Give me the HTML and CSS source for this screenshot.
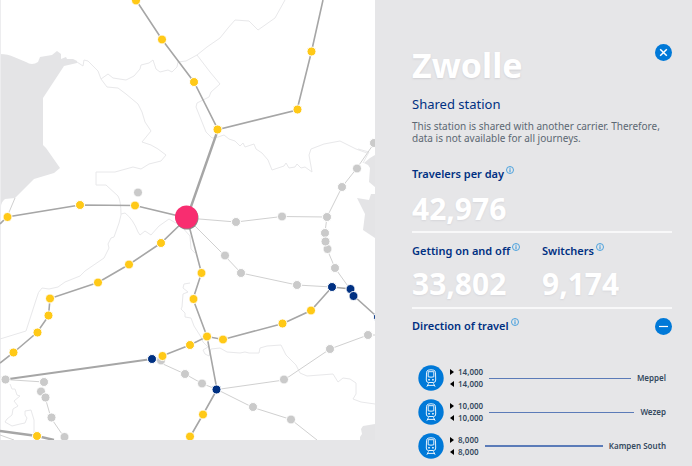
FILE: index.html
```html
<!DOCTYPE html>
<html lang="en">
<head>
<meta charset="utf-8">
<meta name="viewport" content="width=device-width, initial-scale=1">
<title>Zwolle</title>
<link rel="stylesheet" href="styles.css">
</head>
<body>
<svg class="symbols" aria-hidden="true">
  <symbol id="info" viewBox="0 0 8 8"><circle cx="4" cy="4" r="3.5" fill="none" stroke="currentColor" stroke-width=".9"/><path d="M4 1.800v.9M4 3.300v2.900" stroke="currentColor" stroke-width="1.100"/></symbol>
  <symbol id="train" viewBox="0 0 26 26">
    <circle cx="13" cy="13" r="12.700" fill="#0079d8"/>
    <g fill="none" stroke="#fff" stroke-width=".9" stroke-linejoin="round">
      <path d="M10.200 5.200q2.800-.9 5.600 0 1.600.5 1.700 2.500l.2 7.300q0 2.500-2.100 2.500h-5.200q-2.100 0-2.100-2.500l.2-7.300q.1-2 1.700-2.500z"/>
      <path d="M10.200 6.700h5.600v5.100q-2.800.8-5.600 0zM10.600 18.300l-1.700 3.400M15.400 18.300l1.700 3.400M9.400 20.400h7.200"/>
    </g>
    <path d="M10.300 14h1.500v1.400h-1.500zM14.200 14h1.500v1.400h-1.500z" fill="#fff"/>
  </symbol>
</svg>
<main class="layout">
  <section class="map-area" aria-label="Railway map">
    <svg class="map" viewBox="0 0 375 440">
      <path fill="#fff" d="M0 0H375V440H0z"/>
      <g class="water">
        <path d="M0 54Q8 54 14 57L26 62Q32 66 38 62L40 57 52 55 57 51 61 54V59L66 57 67 59 73 59 77 61 77 63 64 66 43 98V145L46 148 53 158 60 168 54 173 34 179 15 198 5 199Q1 202 1 207H0z"/>
        <path d="M375 155L370 158 364 163 368 165 370 168 369 182 375 187V194L371 194 369 200 357 198 365 214 363 230 375 238zM375 424L363 426 361 429 362 434 360 437V440H375z"/>
      </g>
      <path d="M.5 0V440" stroke="#ededef"/>
      <g class="borders">
        <path d="M77 62L83 66 84 60 88 61 98 71 101 79 108 74 113 78 126 80 134 76 140 69 141 65 149 63 153 60 156 69 160 72 168 70 172 72 177 67 178 62 186 61 197 55 207 47 220 38 228 28 235 20 249 21 258 30 275 18 285 0"/>
        <path d="M101 79L107 87 118 88 126 94 138 104 142 112 145 122 151 131 142 142 151 145 158 149 166 155 161 161 149 164 141 169 133 167 115 172H96V185H106L118 196Q121 201 121 215L119 223 114 237 111 238 108 244 109 248 104 258 85 271 80 276 65 282 58 287 49 289 42 288Q38 291 36 300L26 331 0 339"/>
        <path d="M121 214L125 213Q133 219 138 232L140 235 145 231 151 235 159 226 169 219 181 226 190 236 191 249 195 253M197 55L210 72 220 84 211 92 209 97 197 103 196 107 206 132 212 138 218 137 224 135 229 139 235 141 240 146 243 143 245 147 254 144 256 149 262 153 268 160 272 170 281 167 284 166 286 163 289 168 295 167 297 164 301 168 305 167 312 172 309 155 311 149 324 144 340 141 356 149 367 153M190 283L184 284 183 288 188 292 183 294 182 307 181 309 185 313 185 317 191 318 194 326 201 337 203 342 208 347 203 350 205 354 209 356 211 349 220 348 227 352 240 353 245 352 249 353 259 353 260 348 267 346 281 345 286 355 296 365 300 373 307 376 333 374 338 382 343 378 350 379 356 383 356 394 353 399 361 402 375 404"/>
        <path d="M10 384L12 389 15 389 17 395 20 396 14 401 18 406 13 409 12 415 7 419 5 422 12 426 20 424 25 423 27 418 25 415 25 411 31 410 34 420V435M358 149L369 152 363 163"/>
      </g>
      <g class="quiet routes">
        <path d="M15 198L7 217M187 218L236 222 282 216.500 327 217 325 232 326 241 327 249 335 268 350 289M327 217L342 187 357 168 375 142M187 218L225 256 241 273 297 285 332 287M5 379.500L44 382M45 397L51 418 64 437M152 359L185 374 202 383.500 217 389.500 253 407.500 291 419.500 317 440M217 389.500L284 380 330 349 368 335H375M0 435L14 440"/>
      </g>
      <g class="routes">
        <path d="M136 0L162 39.500 194 82 218 129.500 297 110 311.500 51.500 323 0M0 224L7 217 80 205 135 205.500 187 218 161 243 129 264.500 98 282.500 50 298.500 48.500 316 37 332.500 13 353 0 363"/>
        <path d="M187 218L201.500 273 193 299 207 336.500 217 389.500 203 414.500 190 437M162 356L190 345 207 336.500 223 339.500 283 323.500 311 310.500 332 287 351 289 354 296 375 315"/>
        <path class="medium" d="M5 379.500L152 359"/>
        <path class="thick" d="M218 129.500L187 218M0 431L37 436 54 440"/>
      </g>
      <g class="stations quiet-stops"><circle cx="138" cy="192.500" r="4.500"/><circle cx="236" cy="222" r="4.500"/><circle cx="282" cy="216.500" r="4.500"/><circle cx="327" cy="217" r="4.500"/><circle cx="342" cy="187" r="4.500"/><circle cx="357" cy="168.500" r="4.500"/><circle cx="374" cy="143" r="4.500"/><circle cx="325" cy="233" r="4.500"/><circle cx="327.500" cy="249" r="4.500"/><circle cx="325.500" cy="241.500" r="4.500"/><circle cx="335" cy="268" r="4.500"/><circle cx="225" cy="255.500" r="4.500"/><circle cx="241" cy="273" r="4.500"/><circle cx="297" cy="285" r="4.500"/><circle cx="5.500" cy="379.500" r="4.500"/><circle cx="44" cy="382" r="4.500"/><circle cx="41" cy="391.500" r="4.500"/><circle cx="45.500" cy="397.500" r="4.500"/><circle cx="51.500" cy="417.500" r="4.500"/><circle cx="64.500" cy="437" r="4.500"/><circle cx="161" cy="360.500" r="4.500"/><circle cx="185" cy="374" r="4.500"/><circle cx="202" cy="383.500" r="4.500"/><circle cx="253" cy="407" r="4.500"/><circle cx="291" cy="419.500" r="4.500"/><circle cx="284" cy="379.500" r="4.500"/><circle cx="330" cy="349" r="4.500"/><circle cx="368" cy="335" r="4.500"/></g>
      <g class="stations busy-stops"><circle cx="136" cy="0.500" r="4.500"/><circle cx="162" cy="39.500" r="4.500"/><circle cx="194" cy="82" r="4.500"/><circle cx="217.500" cy="129.500" r="4.500"/><circle cx="297.500" cy="109.500" r="4.500"/><circle cx="311.500" cy="51.500" r="4.500"/><circle cx="7.500" cy="217" r="4.500"/><circle cx="80" cy="205" r="4.500"/><circle cx="135" cy="205.500" r="4.500"/><circle cx="161" cy="243" r="4.500"/><circle cx="129" cy="264.500" r="4.500"/><circle cx="98" cy="282.500" r="4.500"/><circle cx="50" cy="298.500" r="4.500"/><circle cx="48.500" cy="315.500" r="4.500"/><circle cx="37.500" cy="332.500" r="4.500"/><circle cx="13.500" cy="352.500" r="4.500"/><circle cx="201.500" cy="273" r="4.500"/><circle cx="193.500" cy="299" r="4.500"/><circle cx="207" cy="336.500" r="4.500"/><circle cx="190" cy="345" r="4.500"/><circle cx="162.500" cy="356" r="4.500"/><circle cx="223" cy="339.500" r="4.500"/><circle cx="282.500" cy="323.500" r="4.500"/><circle cx="311" cy="310.500" r="4.500"/><circle cx="203" cy="414.500" r="4.500"/><circle cx="190" cy="436.500" r="4.500"/><circle cx="37" cy="436" r="4.500"/></g>
      <g class="stations hub-stops"><circle cx="152" cy="359" r="4.500"/><circle cx="332" cy="287" r="4.500"/><circle cx="350.500" cy="289" r="4.500"/><circle cx="353.500" cy="296" r="4.500"/><circle cx="216.500" cy="389.500" r="4.500"/><circle cx="378" cy="317" r="4.500"/></g>
      <circle cx="187" cy="218" r="11.500" fill="#888"/>
      <circle cx="186.500" cy="217" r="11.500" fill="#f82d70"/>
    </svg>
  </section>
  <aside class="panel">
    <header class="top">
      <h1>Zwolle</h1>
      <button class="round" aria-label="Close"><svg viewBox="0 0 17 17"><path d="M5.200 5.200l6.600 6.600M11.800 5.200l-6.600 6.600" stroke="#fff" stroke-width="1.500"/></svg></button>
    </header>
    <h2 class="status">Shared station</h2>
    <p class="note">This station is shared with another carrier. Therefore, data is not available for all journeys.</p>
    <section class="stats">
      <div class="stat"><h3>Travelers per day<svg class="info"><use href="#info"/></svg></h3><p class="number">42,976</p></div>
    </section>
    <section class="stats split">
      <div class="stat"><h3>Getting on and off<svg class="info"><use href="#info"/></svg></h3><p class="number">33,802</p></div>
      <div class="stat"><h3>Switchers<svg class="info"><use href="#info"/></svg></h3><p class="number">9,174</p></div>
    </section>
    <section>
      <div class="direction-head">
        <h3>Direction of travel<svg class="info"><use href="#info"/></svg></h3>
        <button class="round" aria-label="Collapse"><svg viewBox="0 0 17 17"><path d="M4 8.500h9" stroke="#fff" stroke-width="1.200"/></svg></button>
      </div>
      <ul class="directions">
        <li><svg class="train"><use href="#train"/></svg><div class="flows"><span class="out">14,000</span><span class="in">14,000</span></div><span class="rule"></span><span>Meppel</span></li>
        <li><svg class="train"><use href="#train"/></svg><div class="flows"><span class="out">10,000</span><span class="in">10,000</span></div><span class="rule"></span><span>Wezep</span></li>
        <li><svg class="train"><use href="#train"/></svg><div class="flows"><span class="out">8,000</span><span class="in">8,000</span></div><span class="rule strong"></span><span>Kampen South</span></li>
      </ul>
    </section>
  </aside>
</main>
</body>
</html>
```

FILE: styles.css
```css
* { box-sizing: border-box; }
body { margin: 0; background: #e6e6e8; color: #003082; font-family: "Noto Sans", sans-serif; }
h1, h2, h3, p, ul { margin: 0; padding: 0; }
.symbols { display: none; }
.layout { display: grid; grid-template-columns: 375fr 317fr; align-items: start; }
.map { display: block; width: 100%; }
.water { fill: #e4e4e6; }
.borders { fill: none; stroke: #e8e8ea; stroke-width: 1; stroke-linejoin: round; }
.routes { fill: none; stroke: #a6a6a6; stroke-width: 1.6; }
.routes .medium { stroke-width: 1.8; }
.routes .thick { stroke-width: 2.4; }
.quiet { stroke: #d0d0d0; stroke-width: 1; }
.stations { stroke: #fff; stroke-width: 1; }
.quiet-stops { fill: #cacaca; }
.busy-stops { fill: #ffc917; }
.hub-stops { fill: #003082; }
.panel { padding: 40px 20px 0 37px; }
.top { display: flex; justify-content: space-between; align-items: flex-start; }
h1 { color: #fff; font-size: 34px; line-height: 50px; text-shadow: 0 1px 2px #d0d0d4; }
.round { width: 17px; height: 17px; margin-top: 4px; padding: 0; border: 0; border-radius: 50%; background: #0079d8; }
.round svg { display: block; width: 17px; height: 17px; }
.status { margin-top: 4px; font-size: 13px; line-height: 20px; font-weight: 400; }
.note { margin-top: 6px; color: #5c6873; font-size: 10px; line-height: 12px; }
.stats { border-bottom: 2px solid #f8f8f9; }
.note + .stats { margin-top: 22px; }
.split { display: grid; grid-template-columns: 1fr 1fr; padding-top: 10px; }
h3 { font-size: 11px; line-height: 16px; font-weight: 600; }
.info { width: 8px; height: 8px; margin-left: 2px; vertical-align: 4px; color: #3d9bdc; }
.number { margin-top: 7px; padding-bottom: 3px; color: #fff; font-size: 30px; line-height: 39px; font-weight: 700; text-shadow: 0 1px 2px #d6d6da; }
.split .number { margin-top: 5px; padding-bottom: 4px; }
.direction-head { display: flex; justify-content: space-between; padding-top: 9px; }
.direction-head .round { margin-top: 0; }
.directions { margin-top: 30px; padding: 0 6px; list-style: none; display: grid; gap: 8px; color: #34495e; font-size: 8px; line-height: 12px; font-weight: 600; }
.directions li { display: flex; align-items: center; gap: 6px; }
.train { width: 26px; height: 26px; }
.flows { display: grid; }
.flows span { display: flex; align-items: center; gap: 4px; }
.flows span::before { content: ""; border: solid transparent; border-width: 3px 0 3px 4px; border-left-color: #000; }
.flows .in::before { border-width: 3px 4px 3px 0; border-right-color: #000; }
.rule { flex: 1; height: 1px; background: #5b7bb8; }
.rule.strong { height: 2px; }
```
